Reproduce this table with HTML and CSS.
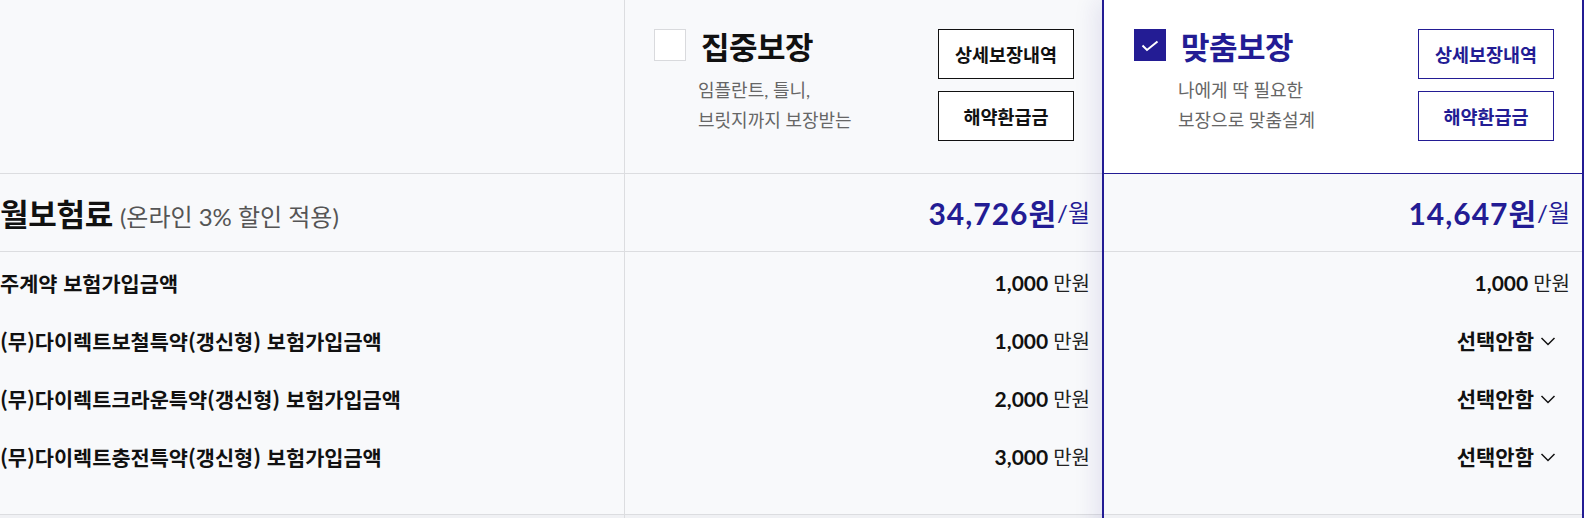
FILE: index.html
```html
<!DOCTYPE html>
<html lang="ko">
<head>
<meta charset="utf-8">
<title>보장 비교</title>
<link rel="stylesheet" href="styles.css">
</head>
<body>
<div class="compare">
  <div class="col col-label">
    <div class="head"></div>
    <div class="premium premium-label">
      <span class="premium-title">월보험료</span>
      <span class="premium-note">(온라인 3% 할인 적용)</span>
    </div>
    <div class="rows">
      <div class="row">주계약 보험가입금액</div>
      <div class="row">(무)다이렉트보철특약(갱신형) 보험가입금액</div>
      <div class="row">(무)다이렉트크라운특약(갱신형) 보험가입금액</div>
      <div class="row">(무)다이렉트충전특약(갱신형) 보험가입금액</div>
    </div>
    <div class="foot"></div>
  </div>

  <div class="col col-plan">
    <div class="head">
      <div class="plan-info">
        <div class="plan-title-row">
          <span class="checkbox"></span>
          <span class="plan-name">집중보장</span>
        </div>
        <p class="plan-desc">임플란트, 틀니,<br>브릿지까지 보장받는</p>
      </div>
      <div class="btns">
        <button class="btn">상세보장내역</button>
        <button class="btn">해약환급금</button>
      </div>
    </div>
    <div class="premium">
      <span class="price">34,726원</span><span class="per">/월</span>
    </div>
    <div class="rows">
      <div class="row row-value"><b class="num">1,000</b><span class="unit">만원</span></div>
      <div class="row row-value"><b class="num">1,000</b><span class="unit">만원</span></div>
      <div class="row row-value"><b class="num">2,000</b><span class="unit">만원</span></div>
      <div class="row row-value"><b class="num">3,000</b><span class="unit">만원</span></div>
    </div>
    <div class="foot"></div>
  </div>

  <div class="col col-plan selected">
    <div class="head">
      <div class="plan-info">
        <div class="plan-title-row">
          <span class="checkbox checked">
            <svg width="32" height="32" viewBox="0 0 32 32"><polyline points="8.5,16.5 13,21 23.5,12.5" fill="none" stroke="#fff" stroke-width="2"/></svg>
          </span>
          <span class="plan-name">맞춤보장</span>
        </div>
        <p class="plan-desc">나에게 딱 필요한<br>보장으로 맞춤설계</p>
      </div>
      <div class="btns">
        <button class="btn">상세보장내역</button>
        <button class="btn">해약환급금</button>
      </div>
    </div>
    <div class="premium">
      <span class="price">14,647원</span><span class="per">/월</span>
    </div>
    <div class="rows">
      <div class="row row-value"><b class="num">1,000</b><span class="unit">만원</span></div>
      <div class="row row-value"><span class="select">선택안함</span><svg class="chev" width="16" height="16" viewBox="0 0 16 16"><polyline points="1.5,5 8,11.5 14.5,5" fill="none" stroke="#111" stroke-width="1.5"/></svg></div>
      <div class="row row-value"><span class="select">선택안함</span><svg class="chev" width="16" height="16" viewBox="0 0 16 16"><polyline points="1.5,5 8,11.5 14.5,5" fill="none" stroke="#111" stroke-width="1.5"/></svg></div>
      <div class="row row-value"><span class="select">선택안함</span><svg class="chev" width="16" height="16" viewBox="0 0 16 16"><polyline points="1.5,5 8,11.5 14.5,5" fill="none" stroke="#111" stroke-width="1.5"/></svg></div>
    </div>
    <div class="foot"></div>
  </div>
</div>
</body>
</html>
```

FILE: styles.css
```css
html, body {
  margin: 0;
  padding: 0;
  height: 518px;
  overflow: hidden;
}
body {
  background: #f8f9fb;
  font-family: Lato, "Noto Sans CJK KR", sans-serif;
  color: #111;
}
.compare {
  display: flex;
  width: 1584px;
}
.col {
  box-sizing: border-box;
  flex: none;
}
.col-label {
  width: 625px;
  border-right: 1px solid #dcdde0;
}
.col-plan {
  width: 477px;
}
.col-plan.selected {
  width: 482px;
  border-left: 2px solid #231c94;
  border-right: 2px solid #231c94;
  box-shadow: -6px 0 22px rgba(40, 32, 140, 0.10);
}
.head {
  box-sizing: border-box;
  height: 174px;
  border-bottom: 1px solid #dcdde0;
  display: flex;
  justify-content: space-between;
  padding: 29px 28px 0 29px;
}
.selected .head {
  background: #fff;
  border-bottom-color: #231c94;
  padding-left: 30px;
}
.plan-title-row {
  display: flex;
  align-items: flex-start;
  gap: 15px;
}
.checkbox {
  box-sizing: border-box;
  width: 32px;
  height: 32px;
  background: #fff;
  border: 1px solid #d9dadd;
  display: block;
}
.checkbox.checked {
  background: #231c94;
  border: none;
}
.checkbox svg {
  display: block;
}
.plan-name {
  font-size: 31px;
  font-weight: 700;
  line-height: 36px;
  letter-spacing: -0.5px;
  color: #111;
}
.selected .plan-name {
  color: #231c94;
}
.plan-desc {
  margin: 10px 0 0 44px;
  font-size: 18px;
  line-height: 30px;
  color: #666;
}
.btns {
  display: flex;
  flex-direction: column;
  gap: 12px;
}
.btn {
  box-sizing: border-box;
  width: 136px;
  height: 50px;
  background: #fff;
  border: 1px solid #111;
  border-radius: 0;
  font-family: Lato, "Noto Sans CJK KR", sans-serif;
  font-size: 18.5px;
  font-weight: 700;
  color: #111;
  padding: 0;
}
.selected .btn {
  border-color: #231c94;
  color: #231c94;
}
.premium {
  box-sizing: border-box;
  height: 78px;
  border-bottom: 1px solid #dcdde0;
  display: flex;
  align-items: center;
  justify-content: flex-end;
  padding-right: 12px;
  color: #231c94;
}
.premium-label {
  justify-content: flex-start;
  align-items: baseline;
  padding-top: 22px;
  color: #111;
}
.premium-title {
  font-size: 31px;
  font-weight: 700;
  letter-spacing: -0.3px;
  line-height: 36px;
}
.premium-note {
  font-size: 24px;
  color: #555;
  margin-left: 7px;
}
.price {
  font-size: 30px;
  font-weight: 700;
  letter-spacing: 1px;
  line-height: 36px;
}
.per {
  font-size: 24px;
  line-height: 36px;
}
.rows {
  box-sizing: border-box;
  height: 263px;
  padding-top: 2px;
  border-bottom: 1px solid #dcdde0;
}
.row {
  height: 58px;
  display: flex;
  align-items: center;
  font-size: 21px;
  font-weight: 700;
  line-height: 28px;
  white-space: nowrap;
}
.col-label .row {
  font-family: "Noto Sans CJK KR", Lato, sans-serif;
  font-size: 20.8px;
}
.row-value {
  justify-content: flex-end;
  padding-right: 12px;
}
.num {
  font-size: 21px;
  font-weight: 700;
}
.unit {
  font-size: 20px;
  font-weight: 400;
  color: #222;
  margin-left: 5px;
}
.select {
  font-size: 21px;
  font-weight: 700;
}
.chev {
  display: block;
  margin: 0 14px 0 6px;
}
.foot {
  height: 20px;
  background: #f0f1f4;
}
```
